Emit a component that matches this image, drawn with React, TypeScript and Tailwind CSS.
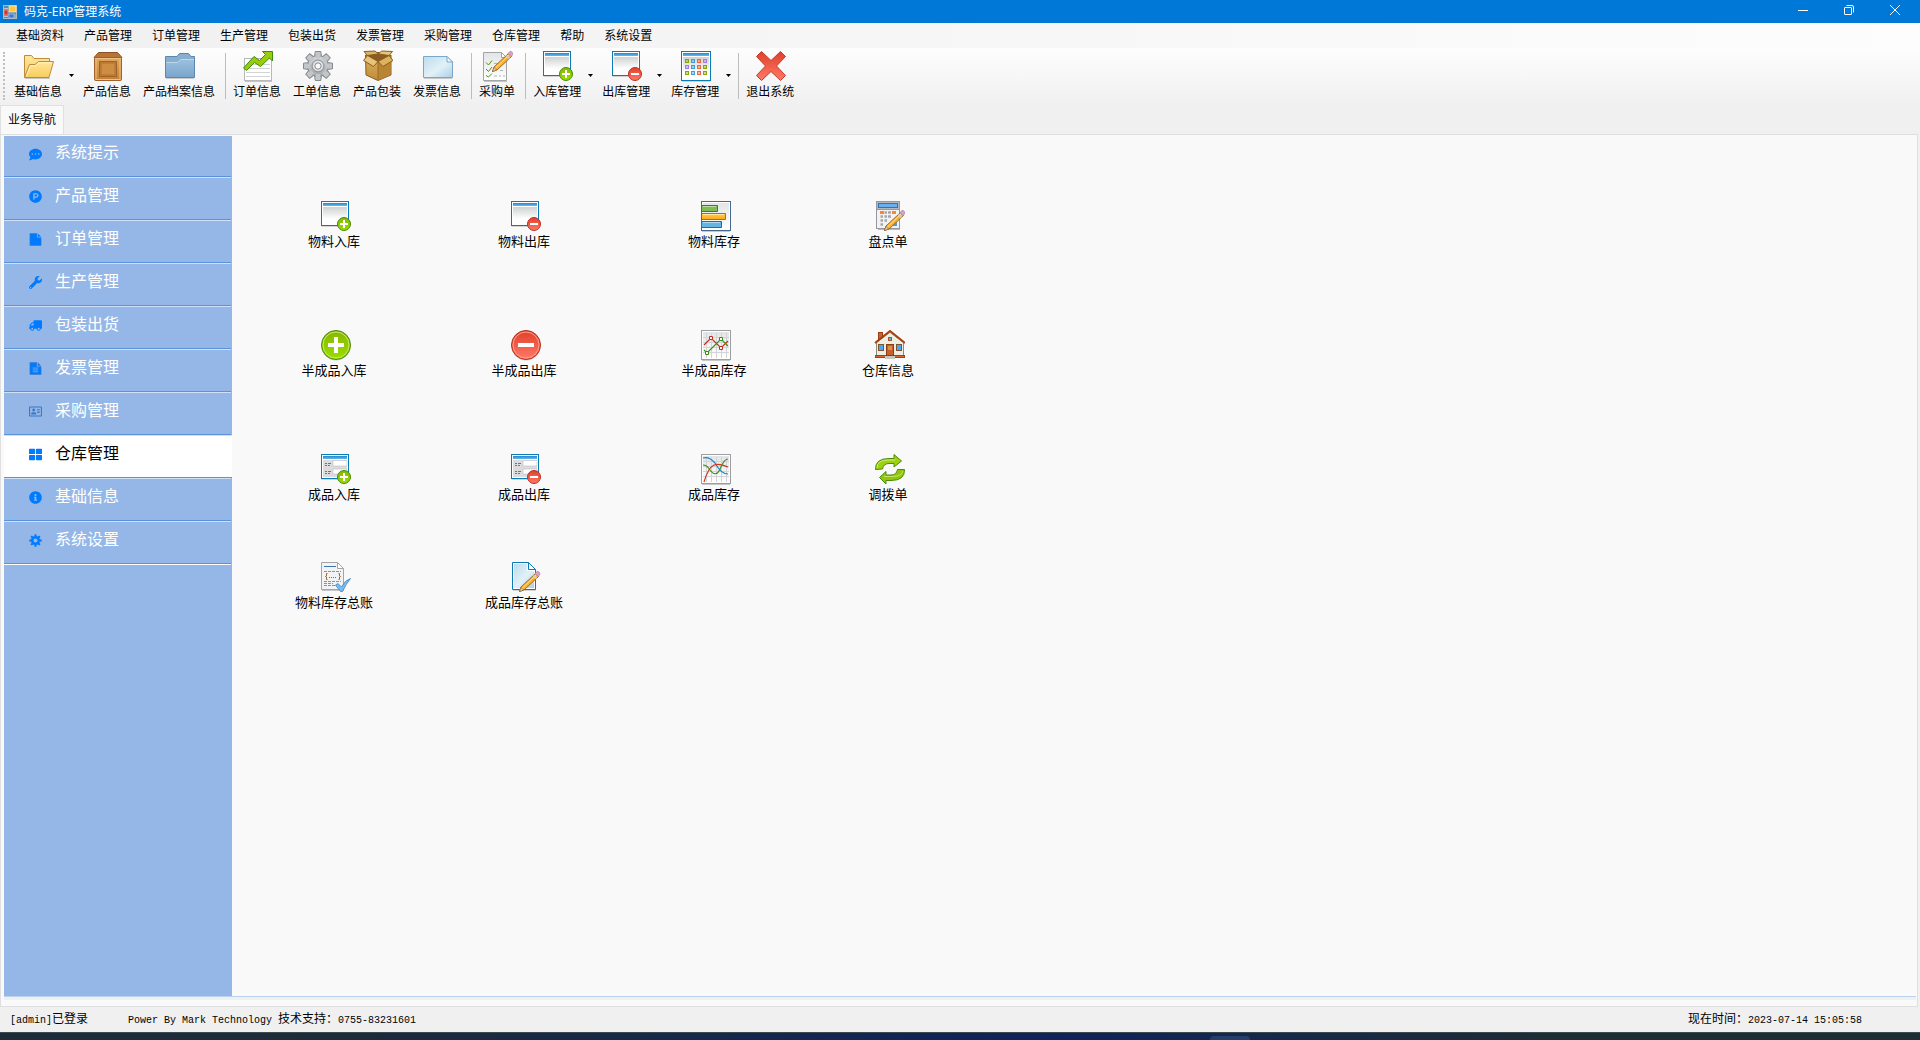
import React, { useState } from 'react';
import clsx from 'clsx';
import {
  FaCommentDots,
  FaInfoCircle,
  FaProductHunt,
  FaRegAddressCard,
  FaThLarge,
  FaTruck,
  FaWrench
} from 'react-icons/fa';

const MENUS = [
  '基础资料',
  '产品管理',
  '订单管理',
  '生产管理',
  '包装出货',
  '发票管理',
  '采购管理',
  '仓库管理',
  '帮助',
  '系统设置'
];

// Shared gradients for every icon on the page
const IconDefs: React.FC = () => (
  <svg className="absolute h-0 w-0" aria-hidden="true">
    <defs>
      <linearGradient id="folder" x1="0" y1="0" x2="0" y2="1">
        <stop offset="0" stopColor="#ffe79a" />
        <stop offset="1" stopColor="#f8cc5c" />
      </linearGradient>
      <linearGradient id="wood" x1="0" y1="0" x2="0" y2="1">
        <stop offset="0" stopColor="#e2a95e" />
        <stop offset="1" stopColor="#c27f33" />
      </linearGradient>
      <linearGradient id="carton" x1="0" y1="0" x2="0" y2="1">
        <stop offset="0" stopColor="#dcb25c" />
        <stop offset="1" stopColor="#c08c3a" />
      </linearGradient>
      <linearGradient id="steel" x1="0" y1="0" x2="0" y2="1">
        <stop offset="0" stopColor="#9cc0de" />
        <stop offset="1" stopColor="#7ba5cd" />
      </linearGradient>
      <linearGradient id="sky" x1="0" y1="0" x2="1" y2="1">
        <stop offset="0" stopColor="#bcdcea" />
        <stop offset="0.55" stopColor="#e2f1f8" />
        <stop offset="1" stopColor="#a9cfe8" />
      </linearGradient>
      <linearGradient id="silver" x1="0" y1="0" x2="0" y2="1">
        <stop offset="0" stopColor="#d6d8da" />
        <stop offset="1" stopColor="#a4a8ac" />
      </linearGradient>
      <linearGradient id="pane" x1="0" y1="0" x2="0" y2="1">
        <stop offset="0" stopColor="#cfd2d2" />
        <stop offset="0.7" stopColor="#ffffff" />
      </linearGradient>
      <linearGradient id="paper" x1="0" y1="0" x2="0" y2="1">
        <stop offset="0" stopColor="#e2e4e6" />
        <stop offset="1" stopColor="#ffffff" />
      </linearGradient>
      <linearGradient id="caption" x1="0" y1="0" x2="0" y2="1">
        <stop offset="0" stopColor="#2488cc" />
        <stop offset="1" stopColor="#66b8ee" />
      </linearGradient>
      <linearGradient id="green" x1="0" y1="0" x2="0" y2="1">
        <stop offset="0" stopColor="#86b800" />
        <stop offset="1" stopColor="#9cdc00" />
      </linearGradient>
      <linearGradient id="red" x1="0" y1="0" x2="0" y2="1">
        <stop offset="0" stopColor="#e0402a" />
        <stop offset="1" stopColor="#ff7a68" />
      </linearGradient>
      <linearGradient id="amber" x1="0" y1="0" x2="0" y2="1">
        <stop offset="0" stopColor="#ffd348" />
        <stop offset="1" stopColor="#ffa41c" />
      </linearGradient>
    </defs>
  </svg>
);

const Glyph: React.FC<{ children: React.ReactNode }> = ({ children }) => (
  <svg viewBox="0 0 32 32" className="h-8 w-8 shrink-0" fill="none" aria-hidden="true">
    {children}
  </svg>
);

const Pencil: React.FC = () => (
  <g>
    <path d="M11.5 21.5 L13 17 L27.5 3.5 L30.5 6.5 L16 20 Z" fill="#ffb02e" stroke="#9a6a24" />
    <path d="M14.5 18 L28 5" stroke="#ffe08a" />
    <path d="M11.5 21.5 L13 17.5 L15.5 20 Z" fill="#f3dcb6" stroke="#7c5a34" strokeWidth="0.6" />
    <path d="M25.5 5.5 L28.5 8.5" stroke="#c9ced3" strokeWidth="2" />
    <path d="M27 3.5 L28.8 1.5 Q30 1 31.3 2.3 Q32.2 3.5 31.8 4.8 L30 6.5 Z" fill="#d9a0cc" stroke="#a878a4" strokeWidth="0.6" />
  </g>
);

// Small round sign on the lower right corner of an icon
const Badge: React.FC<{ kind: 'plus' | 'minus' }> = ({ kind }) => (
  <g>
    <circle
      cx="25"
      cy="24"
      r="6.5"
      fill={kind === 'plus' ? 'url(#green)' : 'url(#red)'}
      stroke={kind === 'plus' ? '#4a8a08' : '#b8301f'}
    />
    <path d={kind === 'plus' ? 'M21 24 H29 M25 20 V28' : 'M21 24 H29'} stroke="#fff" strokeWidth="2" />
  </g>
);

const WindowFrame: React.FC = () => (
  <g>
    <path d="M2.5 26.5 H30" stroke="#000" strokeOpacity="0.15" />
    <rect x="2.5" y="1.5" width="27" height="24" fill="#fff" stroke="#0b7bb5" />
    <rect x="4" y="3" width="24" height="3" fill="url(#caption)" />
  </g>
);

const WindowIcon: React.FC<{ kind: 'plus' | 'minus' }> = ({ kind }) => (
  <Glyph>
    <WindowFrame />
    <rect x="4" y="7" width="24" height="17" fill="url(#pane)" />
    <Badge kind={kind} />
  </Glyph>
);

const FormIcon: React.FC<{ kind: 'plus' | 'minus' }> = ({ kind }) => (
  <Glyph>
    <WindowFrame />
    <rect x="4" y="7" width="24" height="17" fill="#dcdcde" />
    <path d="M14 7.5 H28 V13 H14 Z M14 16 H28 V21 H14 Z" fill="#fff" stroke="#bfc0c4" strokeWidth="0.6" />
    <path d="M6 10.5 H8 M9 10.5 H12 M6 12.5 H8 M9 12.5 H11 M6 18.5 H8 M9 18.5 H12 M6 20.5 H8 M9 20.5 H11" stroke="#74747a" />
    <Badge kind={kind} />
  </Glyph>
);

const CircleIcon: React.FC<{ kind: 'plus' | 'minus' }> = ({ kind }) => (
  <Glyph>
    <circle cx="17" cy="17" r="14.5" fill="#000" fillOpacity="0.18" />
    <circle
      cx="17"
      cy="16"
      r="14.5"
      fill={kind === 'plus' ? 'url(#green)' : 'url(#red)'}
      stroke={kind === 'plus' ? '#4f8c08' : '#b8301f'}
    />
    <circle cx="17" cy="16" r="13" stroke={kind === 'plus' ? '#c6ea6a' : '#ff9e90'} />
    <path d={kind === 'plus' ? 'M9 16 H25 M17 8 V24' : 'M9 16 H25'} stroke="#fff" strokeWidth="4" />
  </Glyph>
);

const OpenFolderIcon: React.FC = () => (
  <Glyph>
    <path d="M3 28.5 H28" stroke="#000" strokeOpacity="0.2" />
    <path d="M2.5 27.5 V5.5 H9.5 L12 8.5 H27.5 V14 L20 26 Z" fill="url(#folder)" stroke="#c08a3e" />
    <path d="M2.5 27.5 L7.5 14.5 H13 L16.5 11.5 H31.5 L27 27.5 Z" fill="url(#folder)" stroke="#c08a3e" />
    <path d="M4.5 26 L8.5 15.8 H13.6 L17 12.8 H30" stroke="#fff4c4" />
  </Glyph>
);

const CrateIcon: React.FC = () => (
  <Glyph>
    <path d="M7.5 2.5 H26.5 L31 7.5 H3 Z" fill="#b87434" stroke="#8a5426" />
    <rect x="3.5" y="7.5" width="27" height="23" rx="1" fill="url(#wood)" stroke="#a0622a" />
    <rect x="5" y="8.5" width="24" height="21" stroke="#eec084" />
    <rect x="8.5" y="11.5" width="17" height="15" fill="#c78536" stroke="#a0622a" />
    <rect x="10" y="13" width="14" height="12" fill="#cd8d42" stroke="#b0702e" />
  </Glyph>
);

const BlueFolderIcon: React.FC = () => (
  <Glyph>
    <path d="M3 28.5 H31" stroke="#000" strokeOpacity="0.18" />
    <path d="M2.5 27.5 V6.5 H14 L16.5 3.5 H25.5 L28 6.5 H31.5 V27.5 Z" fill="#88aed0" stroke="#5c88b0" />
    <path d="M3 27 V12.5 H14.5 L18 9.5 H31 V27 Z" fill="url(#steel)" />
    <path d="M3.5 12.5 H14.5 L18 9.5 H31" stroke="#bcd8ec" />
  </Glyph>
);

const OrderIcon: React.FC = () => (
  <Glyph>
    <path d="M4 31.5 H31" stroke="#000" strokeOpacity="0.2" />
    <rect x="3.5" y="8.5" width="27" height="22" fill="#fff" stroke="#b6b8ba" />
    <path d="M5 14.5 H29 M5 18.5 H29 M5 22.5 H29 M5 26.5 H29" stroke="#d2d4d6" />
    <path
      d="M2.5 18 L13 6.5 L18.5 10.5 L24.5 4.5 L21.5 1.5 H31.5 V11 L28.5 8 L19.5 16.5 L13.5 12.5 L5.5 20.5 Z"
      fill="#98cc0c"
      stroke="#3f8c0c"
    />
  </Glyph>
);

const TEETH = [0, 45, 90, 135, 180, 225, 270, 315];

const GearIcon: React.FC = () => (
  <Glyph>
    {TEETH.map(angle => (
      <path
        key={angle}
        d="M13.5 7 L14.2 1.5 H19.8 L20.5 7 Z"
        fill="#c3c6c9"
        stroke="#85898d"
        transform={`rotate(${angle} 17 16)`}
      />
    ))}
    <circle cx="17" cy="16" r="10.5" fill="url(#silver)" stroke="#85898d" />
    {TEETH.map(angle => (
      <path key={angle} d="M14.5 8 L15 3 H19 L19.5 8 Z" fill="#c3c6c9" transform={`rotate(${angle} 17 16)`} />
    ))}
    <circle cx="17" cy="16" r="6" stroke="#8e9296" />
    <circle cx="17" cy="16" r="4" fill="#f7f7f7" stroke="#e8eaec" strokeWidth="2" />
    <circle cx="17" cy="16" r="3.2" stroke="#85898d" />
  </Glyph>
);

const PackageIcon: React.FC = () => (
  <Glyph>
    <path d="M4.5 5 L17 9.5 L30 5 V25 L17 30.5 L5 25 Z" fill="url(#carton)" stroke="#8a5c1c" />
    <path d="M17 13 V30.5 L29.5 25 V11 Z" fill="#b98434" />
    <path d="M6.5 5.5 L17 2.5 L28.5 5.5 L17 12.5 Z" fill="#8a5c24" stroke="#7a4c18" />
    <path d="M6.5 5.5 L3 1.5 L14 1 L17.5 4 Z" fill="#dcb468" stroke="#8a5c1c" />
    <path d="M28 5.5 L31.5 1.5 L20.5 1 L17.5 4 Z" fill="#e6c47c" stroke="#8a5c1c" />
    <path d="M6.5 5.5 L2.5 10.5 L12.5 16.5 L17 11.5 Z" fill="#e8c47a" stroke="#8a5c1c" />
    <path d="M28 5.5 L32 10.5 L22 16.5 L17 11.5 Z" fill="#dcb25e" stroke="#8a5c1c" />
    <path d="M17 12 V30" stroke="#9a6c28" />
  </Glyph>
);

const InvoiceIcon: React.FC = () => (
  <Glyph>
    <path d="M3 28.5 H31" stroke="#000" strokeOpacity="0.18" />
    <path d="M2.5 6.5 H26 L31.5 12 V27.5 H2.5 Z" fill="url(#sky)" stroke="#7ba6c8" />
    <path d="M26 6.5 V12 H31.5 Z" fill="#f4fafd" stroke="#7ba6c8" />
  </Glyph>
);

const PurchaseIcon: React.FC = () => (
  <Glyph>
    <path d="M3 31.5 H26" stroke="#000" strokeOpacity="0.2" />
    <path d="M2.5 2.5 H20.5 L25.5 7.5 V30.5 H2.5 Z" fill="url(#paper)" stroke="#a2a4a6" />
    <path d="M20.5 2.5 V7.5 H25.5 Z" fill="#fff" stroke="#a2a4a6" />
    <path d="M5 12.5 L7.5 15 L11 10.5 M5 19 L7.5 21.5 L11 17 M5 25.5 L7.5 27 L11 23.5" stroke="#4e9414" />
    <path d="M13 13.5 H18 M19 20.5 H22 M13 26 H16 M18 26 H20 M22 26 H24" stroke="#b0b2b4" />
    <Pencil />
  </Glyph>
);

const STOCK_CELLS = [
  ['#86a600', '#3f9be0', '#f0643c', '#a47ae8'],
  ['#a47ae8', '#3f9be0', '#f0643c', '#86a600'],
  ['#86a600', '#3f9be0', '#f0643c', '#86a600']
];

const StockIcon: React.FC = () => (
  <Glyph>
    <path d="M3 31.5 H31" stroke="#000" strokeOpacity="0.15" />
    <rect x="2.5" y="1.5" width="29" height="29" fill="#fff" stroke="#0b7bb5" />
    <rect x="4" y="3" width="26" height="3" fill="url(#caption)" />
    <rect x="4" y="7" width="26" height="22" fill="url(#pane)" />
    {STOCK_CELLS.map((colors, row) =>
      colors.map((color, col) => (
        <rect
          key={`${row}-${col}`}
          x={6.5 + col * 6}
          y={9.5 + row * 6}
          width="3"
          height="3"
          fill={color}
          fillOpacity="0.4"
          stroke={color}
        />
      ))
    )}
  </Glyph>
);

const ExitIcon: React.FC = () => (
  <Glyph>
    <path
      d="M7.5 1.5 L17 10.5 L26.5 1.5 L31.5 6.5 L22.5 16 L31.5 25.5 L26.5 30.5 L17 21.5 L7.5 30.5 L2.5 25.5 L11.5 16 L2.5 6.5 Z"
      fill="url(#red)"
      stroke="#c23a28"
      strokeLinejoin="round"
    />
  </Glyph>
);

const BarsIcon: React.FC = () => (
  <Glyph>
    <path d="M3 31.5 H31" stroke="#000" strokeOpacity="0.2" />
    <rect x="2.5" y="1.5" width="29" height="29" fill="#fff" stroke="#46688e" />
    <rect x="4" y="3" width="26" height="26" fill="url(#paper)" />
    <path d="M3 5.5 H18.5 V11.5 H3" fill="#80bc54" stroke="#3c7c28" />
    <path d="M3 13.5 H26.5 V19.5 H3" fill="url(#amber)" stroke="#b86c10" />
    <path d="M3 21.5 H22.5 V27.5 H3" fill="#64b4e4" stroke="#1c6ca4" />
    <path d="M4 6.5 H17 M4 14.5 H25 M4 22.5 H21" stroke="#fff" strokeOpacity="0.5" />
  </Glyph>
);

const CalculatorIcon: React.FC = () => (
  <Glyph>
    <path d="M5 29.5 H27" stroke="#000" strokeOpacity="0.25" />
    <rect x="3.5" y="1.5" width="23" height="27" fill="#f2f2f2" stroke="#94989c" />
    <rect x="4" y="2" width="22" height="7" fill="#b4b8bc" />
    <rect x="5.5" y="3.5" width="19" height="4" fill="#6ab0f0" stroke="#3074b4" />
    <path d="M4 9.5 H26" stroke="#94989c" />
    <path d="M7 12.5 H11 M19 12.5 H23" stroke="#ff8238" strokeWidth="3" />
    <path
      d="M11.5 12.5 H14 M15 12.5 H18 M7.5 16.5 H10 M11.5 16.5 H14 M15 16.5 H18 M7.5 20.5 H10 M11.5 20.5 H14 M7.5 24.5 H10"
      stroke="#a4a6aa"
      strokeWidth="2.5"
    />
    <path d="M20 24 H24" stroke="#4a9ce6" strokeWidth="4" />
    <g transform="translate(0 9)">
      <Pencil />
    </g>
  </Glyph>
);

const ChartPaper: React.FC = () => (
  <g>
    <path d="M3 31.5 H31" stroke="#000" strokeOpacity="0.2" />
    <rect x="2.5" y="1.5" width="29" height="29" fill="#fff" stroke="#9c9ea0" />
    <rect x="4" y="3" width="26" height="26" fill="url(#paper)" />
    <path
      d="M7.5 4 V29 M12.5 4 V29 M17.5 4 V29 M22.5 4 V29 M27.5 4 V29 M4 8.5 H30 M4 13.5 H30 M4 18.5 H30 M4 23.5 H30"
      stroke="#d2d4d6"
    />
  </g>
);

const LineChartIcon: React.FC = () => (
  <Glyph>
    <ChartPaper />
    <path d="M5 16 L12 9 L22 19 L29 12" stroke="#c42c20" strokeWidth="1.2" />
    <path d="M5 21 L8 24 L22 10 L29 17" stroke="#3c8c14" strokeWidth="1.2" />
    <path d="M10.5 7.5 H13.5 V10.5 H10.5 Z M20.5 17.5 H23.5 V20.5 H20.5 Z" fill="#fff" stroke="#c42c20" />
    <path d="M6.5 22.5 H9.5 V25.5 H6.5 Z M20.5 8.5 H23.5 V11.5 H20.5 Z" fill="#fff" stroke="#3c8c14" />
  </Glyph>
);

const CurveChartIcon: React.FC = () => (
  <Glyph>
    <ChartPaper />
    <path d="M4 5 Q10 3 16 10 Q22 21 29 21" stroke="#1c84c4" strokeWidth="1.2" />
    <path d="M5 29 Q9 15 15 12 Q21 10 29 14" stroke="#cc3424" strokeWidth="1.2" />
    <path d="M4 12 Q8 12 11 17 Q17 25 21 16 Q25 6 29 6" stroke="#3c8c14" strokeWidth="1.2" />
  </Glyph>
);

const HouseIcon: React.FC = () => (
  <Glyph>
    <rect x="5.5" y="3.5" width="4" height="9" fill="#c8643c" stroke="#9c3c14" />
    <path d="M3.5 14 L17 3.5 L30.5 14 V28 H3.5 Z" fill="#eceee0" stroke="#8c8c7c" />
    <path d="M2 14 L17 2 L32 14" stroke="#a8400c" strokeWidth="2" />
    <path d="M4 14.5 L17 4.5 L30 14.5" stroke="#f8f8f0" strokeWidth="0.8" />
    <rect x="2.5" y="26.5" width="29" height="2" fill="#d8643c" stroke="#a8400c" />
    <rect x="13.5" y="15.5" width="7" height="11" fill="#c4602c" stroke="#8c3c14" />
    <rect x="15" y="17" width="4" height="4" fill="#e08a54" />
    <rect x="12" y="27" width="10" height="3" fill="#c8c8c0" />
    <rect x="15.5" y="8.5" width="3" height="3" fill="#58acf0" stroke="#a8582c" />
    <rect x="5.5" y="15.5" width="5" height="6" fill="#4ca4f4" stroke="#7c5434" />
    <rect x="23.5" y="15.5" width="5" height="6" fill="#4ca4f4" stroke="#7c5434" />
  </Glyph>
);

const TransferIcon: React.FC = () => (
  <Glyph>
    <path
      d="M2.5 16.5 Q2 5.5 16 5.5 H21 V1.5 L28.5 8 L21 14 V10.5 H16 Q10.5 10.5 9.5 16 Z"
      fill="#9cd010"
      stroke="#4c8c0c"
      strokeLinejoin="round"
    />
    <path d="M4 15 Q4 7 15 7 H22" stroke="#d0ec74" />
    <path
      d="M31.5 16.5 Q32 27.5 18 27.5 H13 V31 L6.5 24.5 L13 18.5 V22 H18 Q23.5 22 24.5 16.5 Z"
      fill="#92c60c"
      stroke="#4c8c0c"
      strokeLinejoin="round"
    />
    <path d="M30 18 Q29 23.5 19 23.5 H11" stroke="#c4e460" />
  </Glyph>
);

const MaterialLedgerIcon: React.FC = () => (
  <Glyph>
    <path d="M3 29.5 H25" stroke="#000" strokeOpacity="0.2" />
    <path d="M2.5 1.5 H18.5 L24.5 7.5 V28.5 H2.5 Z" fill="#f2f3f4" stroke="#a2a4a6" />
    <path d="M18.5 1.5 V7.5 H24.5 Z" fill="#fff" stroke="#a2a4a6" />
    <path d="M5 5.5 H17" stroke="#3c74ac" />
    <path d="M5 10.5 H22 M5 20.5 H22 M5 22.5 H14 M5 24.5 H16" stroke="#7c94ac" strokeDasharray="3 1" />
    <path
      d="M8.5 12.5 H7.5 V15 L6.5 15.5 L7.5 16 V18.5 H8.5 M19.5 12.5 H20.5 V15 L21.5 15.5 L20.5 16 V18.5 H19.5"
      stroke="#a8641c"
    />
    <path d="M10 16.5 H18" stroke="#a8641c" strokeDasharray="1 1" />
    <path
      d="M16.5 24 L19 22.5 L22.5 26 Q26 19 31.5 17.5 Q27 23 23.5 30.5 H21.5 Z"
      fill="#7cbcec"
      stroke="#3c84bc"
      strokeWidth="0.8"
    />
  </Glyph>
);

const ProductLedgerIcon: React.FC = () => (
  <Glyph>
    <path d="M4 29.5 H27" stroke="#000" strokeOpacity="0.15" />
    <path d="M3.5 1.5 H19.5 L26.5 8.5 V28.5 H3.5 Z" fill="#fff" stroke="#0b7bb5" />
    <path d="M5 3 H18 V10 H25 V27 H5 Z" fill="url(#sky)" />
    <path d="M19.5 1.5 V8.5 H26.5 Z" fill="#fff" stroke="#0b7bb5" />
    <g transform="translate(-1 9)">
      <Pencil />
    </g>
  </Glyph>
);

// Sidebar drawings that need a wider page or more teeth than the icon set gives
const NavFile: React.FC<{ className?: string }> = ({ className }) => (
  <svg viewBox="0 0 13 14" className={className} aria-hidden="true">
    <path d="M0.5 0.5 H8 V5 H12.5 V13.5 H0.5 Z" fill="currentColor" stroke="#3f78c4" strokeWidth="0.6" />
    <path d="M9 0.5 L12.5 4 H9 Z" fill="currentColor" />
  </svg>
);

const NavFileText: React.FC<{ className?: string }> = ({ className }) => (
  <svg viewBox="0 0 13 14" className={className} aria-hidden="true">
    <path d="M0.5 0.5 H8 V5 H12.5 V13.5 H0.5 Z" fill="currentColor" stroke="#3f78c4" strokeWidth="0.6" />
    <path d="M9 0.5 L12.5 4 H9 Z" fill="currentColor" />
    <path d="M3.5 6.5 H9.5 M3.5 8.5 H9.5 M3.5 10.5 H9.5" stroke="#95b7e7" strokeWidth="0.8" />
  </svg>
);

const NavCog: React.FC<{ className?: string }> = ({ className }) => (
  <svg viewBox="0 0 13 13" className={className} fill="none" aria-hidden="true">
    {TEETH.map(angle => (
      <path key={angle} d="M5.3 2.5 L5.6 0.3 H7.4 L7.7 2.5 Z" fill="currentColor" transform={`rotate(${angle} 6.5 6.5)`} />
    ))}
    <circle cx="6.5" cy="6.5" r="3.3" stroke="currentColor" strokeWidth="2.4" />
  </svg>
);

interface ToolItem {
  label: string;
  icon: React.ReactNode;
  dropdown?: boolean;
}

// Each inner list is one section of the toolbar
const TOOL_GROUPS: ToolItem[][] = [
  [
    { label: '基础信息', icon: <OpenFolderIcon />, dropdown: true },
    { label: '产品信息', icon: <CrateIcon /> },
    { label: '产品档案信息', icon: <BlueFolderIcon /> }
  ],
  [
    { label: '订单信息', icon: <OrderIcon /> },
    { label: '工单信息', icon: <GearIcon /> },
    { label: '产品包装', icon: <PackageIcon /> },
    { label: '发票信息', icon: <InvoiceIcon /> }
  ],
  [{ label: '采购单', icon: <PurchaseIcon /> }],
  [
    { label: '入库管理', icon: <WindowIcon kind="plus" />, dropdown: true },
    { label: '出库管理', icon: <WindowIcon kind="minus" />, dropdown: true },
    { label: '库存管理', icon: <StockIcon />, dropdown: true }
  ],
  [{ label: '退出系统', icon: <ExitIcon /> }]
];

interface NavItem {
  id: string;
  label: string;
  icon: React.ComponentType<{ className?: string }>;
  flip?: boolean;
  muted?: boolean;
}

const NAV_ITEMS: NavItem[] = [
  { id: 'tips', label: '系统提示', icon: FaCommentDots },
  { id: 'product', label: '产品管理', icon: FaProductHunt },
  { id: 'order', label: '订单管理', icon: NavFile },
  { id: 'production', label: '生产管理', icon: FaWrench },
  { id: 'shipping', label: '包装出货', icon: FaTruck, flip: true },
  { id: 'invoice', label: '发票管理', icon: NavFileText },
  { id: 'purchase', label: '采购管理', icon: FaRegAddressCard, muted: true },
  { id: 'warehouse', label: '仓库管理', icon: FaThLarge },
  { id: 'base', label: '基础信息', icon: FaInfoCircle },
  { id: 'settings', label: '系统设置', icon: NavCog }
];

const SHORTCUTS: { label: string; icon: React.ReactNode }[] = [
  { label: '物料入库', icon: <WindowIcon kind="plus" /> },
  { label: '物料出库', icon: <WindowIcon kind="minus" /> },
  { label: '物料库存', icon: <BarsIcon /> },
  { label: '盘点单', icon: <CalculatorIcon /> },
  { label: '半成品入库', icon: <CircleIcon kind="plus" /> },
  { label: '半成品出库', icon: <CircleIcon kind="minus" /> },
  { label: '半成品库存', icon: <LineChartIcon /> },
  { label: '仓库信息', icon: <HouseIcon /> },
  { label: '成品入库', icon: <FormIcon kind="plus" /> },
  { label: '成品出库', icon: <FormIcon kind="minus" /> },
  { label: '成品库存', icon: <CurveChartIcon /> },
  { label: '调拨单', icon: <TransferIcon /> },
  { label: '物料库存总账', icon: <MaterialLedgerIcon /> },
  { label: '成品库存总账', icon: <ProductLedgerIcon /> }
];

const TitleBar: React.FC = () => (
  <header className="flex h-[23px] items-center bg-[#0078d7] pr-[2px] pl-[3px] text-white">
    <svg viewBox="0 0 14 14" className="h-3.5 w-3.5" aria-hidden="true">
      <rect width="14" height="14" fill="#b4b8bc" />
      <rect x="1" y="1" width="12" height="12" fill="#5c88b4" />
      <path d="M1 3.5 H5 M1 11.5 H5 M12 9 V13" stroke="#b4c4d4" />
      <rect x="6" y="1" width="7" height="6" fill="#ffc83c" stroke="#fff0b0" strokeWidth="0.7" />
      <rect x="1" y="5" width="4" height="5" fill="#d03828" stroke="#f4a494" strokeWidth="0.7" />
      <rect x="6" y="9" width="5" height="4" fill="#3c78dc" stroke="#a4c4f4" strokeWidth="0.7" />
    </svg>
    <h1 className="flex-1 pl-[7px] text-xs">码克-ERP管理系统</h1>
    <div className="flex h-full pb-[3px]">
      <button type="button" aria-label="最小化" className="flex w-[46px] items-center justify-center">
        <svg viewBox="0 0 10 10" className="h-2.5 w-2.5" stroke="#fff">
          <path d="M0 5.5 H10" />
        </svg>
      </button>
      <button type="button" aria-label="还原" className="flex w-[46px] items-center justify-center">
        <svg viewBox="0 0 10 10" className="h-2.5 w-2.5" stroke="#fff" fill="none">
          <rect x="0.5" y="2.5" width="7" height="7" rx="0.5" />
          <path d="M2.5 0.5 H8 Q9.5 0.5 9.5 2 V7.5" />
        </svg>
      </button>
      <button type="button" aria-label="关闭" className="flex w-[46px] items-center justify-center">
        <svg viewBox="0 0 10 10" className="h-2.5 w-2.5" stroke="#fff">
          <path d="M0 0 L10 10 M10 0 L0 10" />
        </svg>
      </button>
    </div>
  </header>
);

const ToolBar: React.FC = () => (
  <div
    role="toolbar"
    aria-label="工具栏"
    className="flex h-[57px] items-start bg-linear-to-b from-[#fdfdfd] via-[#f7f7f7] to-[#f0f0f0] pl-[3px]"
  >
    <div className="mt-1 mr-[3px] h-12 w-0 border-l-2 border-dotted border-[#c0c0c0]" />
    {TOOL_GROUPS.map((group, index) => (
      <React.Fragment key={group[0].label}>
        {index > 0 && <div className="mt-[5px] mr-px ml-1 h-[46px] w-px bg-[#bdbdbd]" />}
        {group.map(tool => (
          <div key={tool.label} className="flex">
            <button type="button" className="flex flex-col items-center px-1.5 pt-0.5">
              {tool.icon}
              <span className="text-xs leading-5">{tool.label}</span>
            </button>
            {tool.dropdown && (
              <button type="button" aria-label={`${tool.label}菜单`} className="flex w-[9px] items-center pl-px">
                <svg viewBox="0 0 5 3" className="h-[3px] w-[5px]">
                  <path d="M0 0 H5 L2.5 3 Z" fill="#000" />
                </svg>
              </button>
            )}
          </div>
        ))}
      </React.Fragment>
    ))}
  </div>
);

interface SideNavProps {
  active: string;
  onSelect: (id: string) => void;
}

const SideNav: React.FC<SideNavProps> = ({ active, onSelect }) => (
  <nav aria-label="业务导航" className="flex w-[228px] shrink-0 flex-col bg-[#95b7e7] pr-px">
    {NAV_ITEMS.map((item, index) => (
      <button
        key={item.id}
        type="button"
        onClick={() => onSelect(item.id)}
        className={clsx(
          'flex items-center border-b border-b-[#5a92dc] pl-[25px] text-left text-base',
          index === 0 ? 'h-[41px]' : 'h-[43px] border-t border-t-[#cfe0f8]',
          item.id === active ? '-mr-px bg-white text-black' : 'text-white'
        )}
      >
        <item.icon
          className={clsx(
            'mb-1 h-[13px] w-[13px]',
            item.muted ? 'text-[#3a78c8]' : 'text-[#007bff]',
            item.flip && '-scale-x-100'
          )}
        />
        <span className="pb-2 pl-[13px] leading-5">{item.label}</span>
      </button>
    ))}
    <div className="h-px bg-white" />
  </nav>
);

const ShortcutPanel: React.FC = () => (
  <section
    aria-label="仓库管理"
    className="grid flex-1 auto-rows-[108px] grid-cols-[190px_190px_190px_158px] grid-rows-[129px_124px_108px] content-start pt-16 pl-[7px]"
  >
    {SHORTCUTS.map(item => (
      <div key={item.label} className="flex justify-center">
        <button type="button" className="flex flex-col items-center self-start">
          <span className="pl-0.5">{item.icon}</span>
          <span className="text-[13px] leading-[18px]">{item.label}</span>
        </button>
      </div>
    ))}
  </section>
);

const StatusBar: React.FC = () => (
  <footer className="flex h-[25px] items-center bg-[#f0f0f0] pr-[58px] pl-2.5 text-xs whitespace-pre">
    <p className="w-[118px]">
      <span className="font-['Liberation_Mono',monospace] text-[10px]">[admin]</span>已登录
    </p>
    <p className="flex-1">
      <span className="font-['Liberation_Mono',monospace] text-[10px]">Power By Mark Technology </span>
      技术支持：
      <span className="font-['Liberation_Mono',monospace] text-[10px]">0755-83231601</span>
    </p>
    <p>
      现在时间：
      <time className="font-['Liberation_Mono',monospace] text-[10px]">2023-07-14 15:05:58</time>
    </p>
  </footer>
);

const App: React.FC = () => {
  const [active, setActive] = useState('warehouse');

  return (
    <div className="flex min-h-screen flex-col bg-[#f0f0f0] font-['Noto_Sans','Noto_Sans_CJK_SC',sans-serif] text-black">
      <IconDefs />
      <TitleBar />

      <nav aria-label="主菜单" className="flex h-[25px] items-center bg-linear-to-r from-[#f0f0f0] to-[#fdfdfd] pl-1.5">
        {MENUS.map(menu => (
          <button key={menu} type="button" className="px-2.5 text-xs">
            {menu}
          </button>
        ))}
      </nav>

      <ToolBar />

      {/* Tab strip */}
      <div role="tablist" className="flex h-[29px]">
        <button
          type="button"
          role="tab"
          aria-selected="true"
          className="-mb-px w-16 border border-b-0 border-[#e0e0e0] bg-[#f9f9f9] pb-0.5 text-xs"
        >
          业务导航
        </button>
      </div>

      {/* Tab page */}
      <div className="mr-0.5 flex flex-1 flex-col border border-[#dfdfdf] bg-[#f9f9f9] pt-px pr-px pb-1.5 pl-[3px]">
        <main className="flex flex-1 border-b border-[#b9d2ee]">
          <SideNav active={active} onSelect={setActive} />
          <ShortcutPanel />
        </main>
        <div className="h-[3px] bg-[#f0f0f0]" />
      </div>

      <StatusBar />

      {/* Strip of desktop under the window */}
      <div className="flex h-2 items-end border-t border-[#3c4a50] bg-linear-to-r from-[#1e2b38] from-15% via-[#10225a] via-55% to-[#1e2c36] to-80% pl-[63%]">
        <div className="h-1 w-10 rounded-t-sm bg-[#24406a]" />
      </div>
    </div>
  );
};

export default App;
